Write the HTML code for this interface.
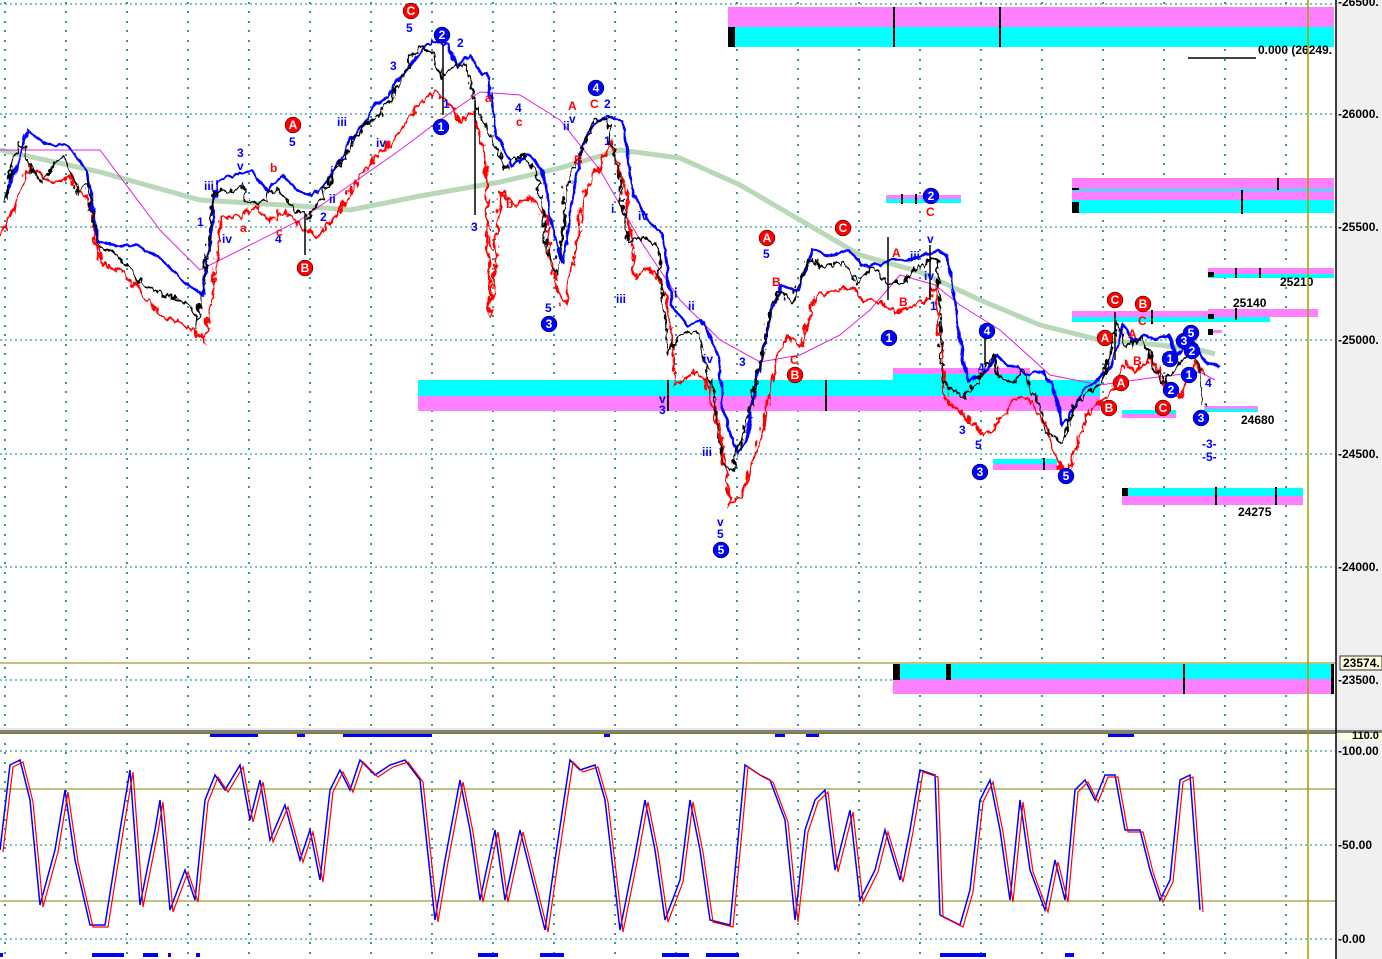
<!DOCTYPE html>
<html><head><meta charset="utf-8"><style>
html,body{margin:0;padding:0;background:#fff;overflow:hidden}
svg{display:block}
text{font-family:"Liberation Sans",sans-serif;font-weight:bold}
</style></head><body>
<svg width="1382" height="959" viewBox="0 0 1382 959" xmlns="http://www.w3.org/2000/svg">
<defs>
<pattern id="dots" x="4" y="2" width="61" height="19" patternUnits="userSpaceOnUse">
<rect x="0" y="0" width="2" height="2" fill="#008080"/><rect x="0" y="9" width="2" height="2" fill="#008080"/>
</pattern>
<filter id="jag" x="-5%" y="-5%" width="110%" height="110%">
<feTurbulence type="turbulence" baseFrequency="0.12 0.06" numOctaves="2" seed="3" result="t"/>
<feDisplacementMap in="SourceGraphic" in2="t" scale="10" xChannelSelector="R" yChannelSelector="G"/>
</filter>
<filter id="jag2" x="-5%" y="-5%" width="110%" height="110%">
<feTurbulence type="turbulence" baseFrequency="0.08 0.04" numOctaves="2" seed="7" result="t"/>
<feDisplacementMap in="SourceGraphic" in2="t" scale="6" xChannelSelector="R" yChannelSelector="G"/>
</filter>
</defs>
<rect width="1382" height="959" fill="#fff"/>
<rect x="0" y="0" width="1336" height="728" fill="url(#dots)" opacity="0.8"/>
<rect x="0" y="738" width="1336" height="221" fill="url(#dots)" opacity="0.8"/>
<g stroke="#008080" stroke-width="1" stroke-dasharray="2,3">
<line x1="0" y1="4" x2="1336" y2="4"/>
<line x1="0" y1="114" x2="1336" y2="114"/>
<line x1="0" y1="227" x2="1336" y2="227"/>
<line x1="0" y1="340" x2="1336" y2="340"/>
<line x1="0" y1="454" x2="1336" y2="454"/>
<line x1="0" y1="567" x2="1336" y2="567"/>
<line x1="0" y1="680" x2="1336" y2="680"/>
<line x1="0" y1="751" x2="1336" y2="751"/>
<line x1="0" y1="845" x2="1336" y2="845"/>
<line x1="0" y1="939" x2="1336" y2="939"/>
</g>
<line x1="0" y1="663" x2="1336" y2="663" stroke="#808000"/>
<line x1="0" y1="789" x2="1336" y2="789" stroke="#808000"/>
<line x1="0" y1="901" x2="1336" y2="901" stroke="#808000"/>
<g>
<rect x="728" y="7" width="606" height="20" fill="#ff80ff"/><rect x="728" y="27" width="606" height="20" fill="#00ffff"/>
<rect x="728" y="27" width="7" height="20" fill="#000"/><rect x="893" y="7" width="2" height="40" fill="#000"/><rect x="999" y="7" width="2" height="40" fill="#000"/>
<rect x="886" y="195" width="75" height="4" fill="#ff80ff"/><rect x="886" y="199" width="75" height="4" fill="#00ffff"/>
<rect x="901" y="194" width="2" height="10" fill="#000"/><rect x="915" y="194" width="2" height="10" fill="#000"/>
<rect x="1072" y="178" width="262" height="22" fill="#ff80ff"/><rect x="1072" y="189" width="262" height="2" fill="#00ffff"/><rect x="1072" y="200" width="262" height="13" fill="#00ffff"/>
<rect x="1072" y="202" width="7" height="11" fill="#000"/><rect x="1072" y="188" width="7" height="2" fill="#000"/><rect x="1241" y="190" width="2" height="24" fill="#000"/><rect x="1277" y="178" width="2" height="12" fill="#000"/>
<rect x="1208" y="268" width="126" height="6" fill="#ff80ff"/><rect x="1208" y="274" width="126" height="4" fill="#00ffff"/><rect x="1208" y="272" width="6" height="5" fill="#000"/><rect x="1235" y="268" width="2" height="10" fill="#000"/><rect x="1259" y="268" width="2" height="10" fill="#000"/>
<rect x="1072" y="311" width="246" height="6" fill="#ff80ff"/><rect x="1072" y="317" width="198" height="5" fill="#00ffff"/><rect x="1208" y="309" width="110" height="5" fill="#ff80ff"/><rect x="1208" y="314" width="6" height="5" fill="#000"/><rect x="1235" y="308" width="2" height="12" fill="#000"/><rect x="1151" y="310" width="2" height="14" fill="#000"/>
<rect x="1208" y="330" width="14" height="3" fill="#ff80ff"/><rect x="1208" y="329" width="5" height="6" fill="#000"/>
<rect x="418" y="380" width="682" height="16" fill="#00ffff"/><rect x="418" y="396" width="682" height="15" fill="#ff80ff"/>
<rect x="893" y="368" width="137" height="6" fill="#ff80ff"/><rect x="893" y="374" width="137" height="6" fill="#00ffff"/>
<rect x="667" y="380" width="2" height="31" fill="#000"/><rect x="825" y="380" width="2" height="31" fill="#000"/>
<rect x="1122" y="410" width="54" height="4" fill="#00ffff"/><rect x="1122" y="414" width="54" height="4" fill="#ff80ff"/>
<rect x="1204" y="406" width="54" height="3" fill="#ff80ff"/><rect x="1204" y="409" width="54" height="3" fill="#00ffff"/>
<rect x="993" y="459" width="64" height="5" fill="#00ffff"/><rect x="993" y="464" width="64" height="6" fill="#ff80ff"/><rect x="1043" y="458" width="2" height="12" fill="#000"/>
<rect x="1122" y="488" width="181" height="8" fill="#00ffff"/><rect x="1122" y="496" width="181" height="9" fill="#ff80ff"/><rect x="1122" y="488" width="6" height="8" fill="#000"/><rect x="1215" y="487" width="2" height="18" fill="#000"/><rect x="1275" y="487" width="2" height="18" fill="#000"/>
<rect x="893" y="664" width="441" height="15" fill="#00ffff"/><rect x="893" y="679" width="441" height="15" fill="#ff80ff"/>
<rect x="893" y="664" width="7" height="16" fill="#000"/><rect x="946" y="664" width="5" height="16" fill="#000"/><rect x="1183" y="664" width="2" height="30" fill="#000"/><rect x="1331" y="664" width="3" height="30" fill="#000"/>
</g>
<line x1="1188" y1="58" x2="1256" y2="58" stroke="#000" stroke-width="1.5"/>
<polyline fill="none" stroke="#b8d8b8" stroke-width="5" points="0,150 100,172 200,200 300,206 350,210 420,196 500,182 560,168 620,150 680,158 740,185 800,220 860,255 920,272 980,300 1040,325 1100,340 1160,345 1200,350 1215,354"/>
<polyline fill="none" stroke="#e020e0" stroke-width="1" points="0,150 100,150 160,230 200,270 250,245 300,220 350,185 400,150 440,120 480,92 520,95 560,120 600,170 640,240 680,300 720,340 760,362 800,355 840,335 870,310 900,275 935,285 960,305 1000,330 1050,375 1100,385 1150,378 1200,372 1215,380"/>
<g fill="none" stroke-width="2.5">
<polyline stroke="#ff0000" filter="url(#jag)" transform="translate(8,14)" points="-8,218 20,150 40,165 60,160 80,190 90,245 110,255 130,275 150,300 170,305 195,325 205,255 210,200 230,200 245,190 260,205 275,195 290,210 305,220 320,205 335,185 350,160 365,140 380,128 395,105 410,85 425,75 440,90 450,105 462,95 475,140 480,300 490,175 505,190 520,180 535,200 545,270 555,290 565,230 575,175 590,150 600,125 615,175 625,260 640,250 655,275 665,370 680,355 695,360 710,420 720,490 730,480 740,450 750,420 765,345 775,320 790,330 805,280 820,275 840,272 855,285 870,285 885,295 900,290 915,285 925,270 935,380 955,400 975,420 990,405 1000,385 1010,380 1020,385 1035,410 1045,440 1055,460 1065,430 1075,400 1090,385 1105,370 1115,345 1125,355 1140,340 1150,360 1160,375 1170,380 1185,345 1195,360"/>
<polyline stroke="#0000ff" filter="url(#jag2)" transform="translate(6,-6)" points="0,200 20,135 40,150 60,150 80,175 90,245 110,250 130,250 150,260 170,280 195,300 205,230 210,185 230,180 245,175 260,195 275,180 290,195 305,200 320,185 335,160 350,135 365,115 380,100 395,80 410,60 425,45 440,50 450,70 462,60 475,80 480,80 490,140 505,170 520,160 535,175 545,230 555,270 565,200 575,150 590,125 600,120 615,125 625,200 640,225 655,240 665,310 680,330 695,325 710,360 720,430 730,460 740,440 750,380 765,310 775,290 790,295 805,255 820,260 840,255 855,270 870,270 885,265 900,265 915,260 930,255 940,260 950,330 960,385 975,380 990,360 1000,370 1010,370 1020,380 1035,375 1045,390 1055,430 1065,415 1075,395 1090,385 1105,370 1115,330 1125,345 1140,340 1150,345 1160,340 1170,360 1185,345 1195,360 1200,370 1212,370"/>
<polyline stroke="#000" stroke-width="2" filter="url(#jag)" points="0,205 10,160 20,140 30,170 40,180 50,160 60,155 70,170 75,190 85,180 95,240 110,250 130,270 150,290 170,295 190,305 195,325 205,250 210,190 230,190 240,180 245,200 260,200 275,185 290,205 305,215 320,195 335,165 350,140 365,120 380,110 395,85 410,55 420,45 430,50 440,75 450,65 462,60 475,110 490,140 505,165 520,150 535,170 545,250 555,275 565,180 575,155 590,120 605,115 615,165 625,240 640,235 655,245 665,350 680,330 695,330 710,390 720,460 730,470 740,430 750,400 765,320 775,290 790,300 805,255 820,265 840,260 855,280 870,265 885,280 900,280 915,265 935,255 940,380 960,395 975,380 990,355 1000,375 1010,380 1020,370 1035,395 1045,430 1060,440 1070,405 1085,390 1100,380 1115,320 1125,345 1140,335 1150,360 1160,380 1170,370 1185,350 1195,360 1203,405"/>
</g>
<g stroke="#000" stroke-width="1.5">
<line x1="888" y1="237" x2="888" y2="300"/><line x1="930" y1="245" x2="930" y2="300"/><line x1="475" y1="100" x2="475" y2="215"/><line x1="443" y1="45" x2="443" y2="115"/><line x1="1115" y1="312" x2="1115" y2="360"/><line x1="985" y1="330" x2="985" y2="365"/><line x1="305" y1="215" x2="305" y2="255"/>
</g>
<g font-size="12">
<g fill="#0000ff">
<text x="406" y="32">5</text><text x="457" y="47">2</text><text x="390" y="70">3</text><text x="443" y="108">1</text><text x="515" y="112">4</text><text x="337" y="126">iii</text><text x="376" y="147">iv</text><text x="289" y="146">5</text><text x="237" y="157">3</text><text x="237" y="170">v</text><text x="204" y="190">iii</text><text x="197" y="226">1</text><text x="222" y="243">iv</text><text x="275" y="243">4</text><text x="320" y="221">2</text><text x="330" y="175">i</text><text x="329" y="203">ii</text><text x="471" y="231">3</text><text x="545" y="312">5</text><text x="563" y="130">ii</text><text x="569" y="123">v</text><text x="604" y="108">2</text><text x="604" y="145">1</text><text x="611" y="213">i</text><text x="638" y="220">iv</text><text x="616" y="303">iii</text><text x="674" y="297">i</text><text x="688" y="310">ii</text><text x="659" y="403">v</text><text x="659" y="414">3</text><text x="703" y="363">iv</text><text x="702" y="456">iii</text><text x="739" y="366">3</text><text x="746" y="420">4</text><text x="763" y="258">5</text><text x="717" y="526">v</text><text x="717" y="538">5</text><text x="927" y="243">v</text><text x="910" y="260">iii</text><text x="924" y="280">iv</text><text x="930" y="310">1</text><text x="959" y="434">3</text><text x="975" y="449">5</text><text x="978" y="372">4</text><text x="1202" y="448" font-weight="normal">-3-</text><text x="1202" y="461" font-weight="normal">-5-</text><text x="1205" y="387" font-weight="normal">4</text>
</g>
<g fill="#ff0000">
<text x="240" y="232">a</text><text x="270" y="172">b</text><text x="276" y="236">c</text><text x="506" y="208">b</text><text x="516" y="126">c</text><text x="485" y="102">a</text><text x="568" y="110">A</text><text x="590" y="108">C</text><text x="574" y="164">B</text><text x="926" y="216">C</text><text x="892" y="257">A</text><text x="899" y="306">B</text><text x="790" y="364">C</text><text x="772" y="286">B</text><text x="1128" y="338">A</text><text x="1133" y="365">B</text>
</g>
<text x="1138" y="325" fill="#ff0000">C</text>
</g>
<g font-size="12" text-anchor="middle">
<g fill="#ff0000" stroke="#000" stroke-width="0.5">
<circle cx="411" cy="11" r="8"/><circle cx="293" cy="125" r="8"/><circle cx="305" cy="268" r="8"/><circle cx="767" cy="238" r="8"/><circle cx="843" cy="228" r="8"/><circle cx="795" cy="375" r="8"/><circle cx="1115" cy="300" r="8"/><circle cx="1143" cy="304" r="8"/><circle cx="1105" cy="338" r="8"/><circle cx="1121" cy="383" r="8"/><circle cx="1109" cy="408" r="8"/><circle cx="1163" cy="408" r="8"/>
</g>
<g fill="#0000ff" stroke="#000" stroke-width="0.5">
<circle cx="442" cy="35" r="8"/><circle cx="441" cy="127" r="8"/><circle cx="549" cy="324" r="8"/><circle cx="596" cy="88" r="8"/><circle cx="721" cy="550" r="8"/><circle cx="931" cy="196" r="8"/><circle cx="889" cy="338" r="8"/><circle cx="987" cy="331" r="8"/><circle cx="980" cy="472" r="8"/><circle cx="1066" cy="476" r="8"/><circle cx="1170" cy="359" r="8"/><circle cx="1171" cy="390" r="8"/><circle cx="1184" cy="341" r="8"/><circle cx="1191" cy="333" r="8"/><circle cx="1192" cy="351" r="8"/><circle cx="1189" cy="375" r="8"/><circle cx="1201" cy="418" r="8"/>
</g>
<g fill="#fff">
<text x="411" y="15">C</text><text x="293" y="129">A</text><text x="305" y="272">B</text><text x="767" y="242">A</text><text x="843" y="232">C</text><text x="795" y="379">B</text><text x="1115" y="304">C</text><text x="1143" y="308">B</text><text x="1105" y="342">A</text><text x="1121" y="387">A</text><text x="1109" y="412">B</text><text x="1163" y="412">C</text>
<text x="442" y="39">2</text><text x="441" y="131">1</text><text x="549" y="328">3</text><text x="596" y="92">4</text><text x="721" y="554">5</text><text x="931" y="200">2</text><text x="889" y="342">1</text><text x="987" y="335">4</text><text x="980" y="476">3</text><text x="1066" y="480">5</text><text x="1170" y="363">1</text><text x="1171" y="394">2</text><text x="1184" y="345">3</text><text x="1191" y="337">5</text><text x="1192" y="355">2</text><text x="1189" y="379">1</text><text x="1201" y="422">3</text>
</g>
</g>
<g font-size="12" fill="#000">
<text x="1258" y="54">0.000 (26249.</text><text x="1280" y="286">25210</text><text x="1233" y="307">25140</text><text x="1241" y="424">24680</text><text x="1238" y="516">24275</text>
</g>
<g fill="#0000ff">
<rect x="210" y="733" width="48" height="4"/><rect x="297" y="733" width="8" height="4"/><rect x="343" y="733" width="89" height="4"/><rect x="604" y="733" width="6" height="4"/><rect x="775" y="733" width="10" height="4"/><rect x="806" y="733" width="13" height="4"/><rect x="1108" y="733" width="26" height="4"/>
<rect x="0" y="953" width="3" height="4"/><rect x="92" y="953" width="32" height="4"/><rect x="143" y="953" width="15" height="4"/><rect x="168" y="953" width="3" height="4"/><rect x="196" y="953" width="4" height="4"/><rect x="478" y="953" width="20" height="4"/><rect x="540" y="953" width="24" height="4"/><rect x="662" y="953" width="27" height="4"/><rect x="706" y="953" width="33" height="4"/><rect x="940" y="953" width="46" height="4"/><rect x="1065" y="953" width="9" height="4"/>
</g>
<polyline fill="none" stroke="#0000ff" stroke-width="1.5" points="0,850 10,765 20,760 30,800 40,905 55,850 65,790 75,860 90,925 105,925 120,830 130,770 140,905 155,830 160,800 170,910 185,870 195,900 205,800 215,775 225,790 240,765 250,820 260,780 270,840 285,805 300,860 310,830 320,880 330,790 340,770 350,790 360,760 375,775 390,765 405,760 420,780 435,920 445,860 460,780 470,830 480,900 495,830 505,900 520,830 530,870 545,930 555,860 570,760 580,770 595,765 605,800 620,930 635,855 645,800 655,850 665,920 680,880 690,800 700,850 710,920 730,925 745,765 760,775 770,780 785,820 795,920 805,830 815,800 825,790 835,870 850,810 860,900 875,870 885,830 900,880 910,830 920,770 935,775 940,915 960,925 970,890 980,800 990,780 1000,830 1010,900 1020,800 1030,870 1045,910 1055,860 1065,900 1075,790 1085,780 1095,800 1105,775 1115,775 1125,830 1140,830 1150,870 1160,900 1170,880 1180,780 1190,775 1200,910"/>
<polyline fill="none" stroke="#ff0000" stroke-width="1.2" transform="translate(3,2)" points="0,850 10,765 20,760 30,800 40,905 55,850 65,790 75,860 90,925 105,925 120,830 130,770 140,905 155,830 160,800 170,910 185,870 195,900 205,800 215,775 225,790 240,765 250,820 260,780 270,840 285,805 300,860 310,830 320,880 330,790 340,770 350,790 360,760 375,775 390,765 405,760 420,780 435,920 445,860 460,780 470,830 480,900 495,830 505,900 520,830 530,870 545,930 555,860 570,760 580,770 595,765 605,800 620,930 635,855 645,800 655,850 665,920 680,880 690,800 700,850 710,920 730,925 745,765 760,775 770,780 785,820 795,920 805,830 815,800 825,790 835,870 850,810 860,900 875,870 885,830 900,880 910,830 920,770 935,775 940,915 960,925 970,890 980,800 990,780 1000,830 1010,900 1020,800 1030,870 1045,910 1055,860 1065,900 1075,790 1085,780 1095,800 1105,775 1115,775 1125,830 1140,830 1150,870 1160,900 1170,880 1180,780 1190,775 1200,910"/>
<rect x="0" y="728" width="1382" height="2" fill="#e8e8e8"/><rect x="0" y="730" width="1382" height="3" fill="#808080"/><rect x="0" y="733" width="1336" height="1" fill="#808000"/>
<line x1="1308" y1="0" x2="1308" y2="959" stroke="#a0a000" stroke-width="1.5"/>
<rect x="1336" y="0" width="46" height="728" fill="#f0f0f0"/><rect x="1336" y="734" width="46" height="225" fill="#f0f0f0"/>
<line x1="1336" y1="0" x2="1336" y2="959" stroke="#000" stroke-width="1.5"/>
<g font-size="12" fill="#000" font-weight="normal">
<text x="1338" y="6">-26500.</text><text x="1338" y="118">-26000.</text><text x="1338" y="231">-25500.</text><text x="1338" y="344">-25000.</text><text x="1338" y="458">-24500.</text><text x="1338" y="571">-24000.</text><text x="1338" y="684">-23500.</text>
<text x="1338" y="755">-100.00</text><text x="1338" y="849">-50.00</text><text x="1338" y="943">-0.00</text>
</g>
<rect x="1340" y="656" width="42" height="14" fill="#ffffe0" stroke="#000" stroke-width="0.8"/><text x="1343" y="667" font-size="12">23574.</text>
<rect x="1340" y="733" width="42" height="7" fill="#ffffe0"/><text x="1352" y="739" font-size="11">110.0</text>
</svg>
</body></html>
